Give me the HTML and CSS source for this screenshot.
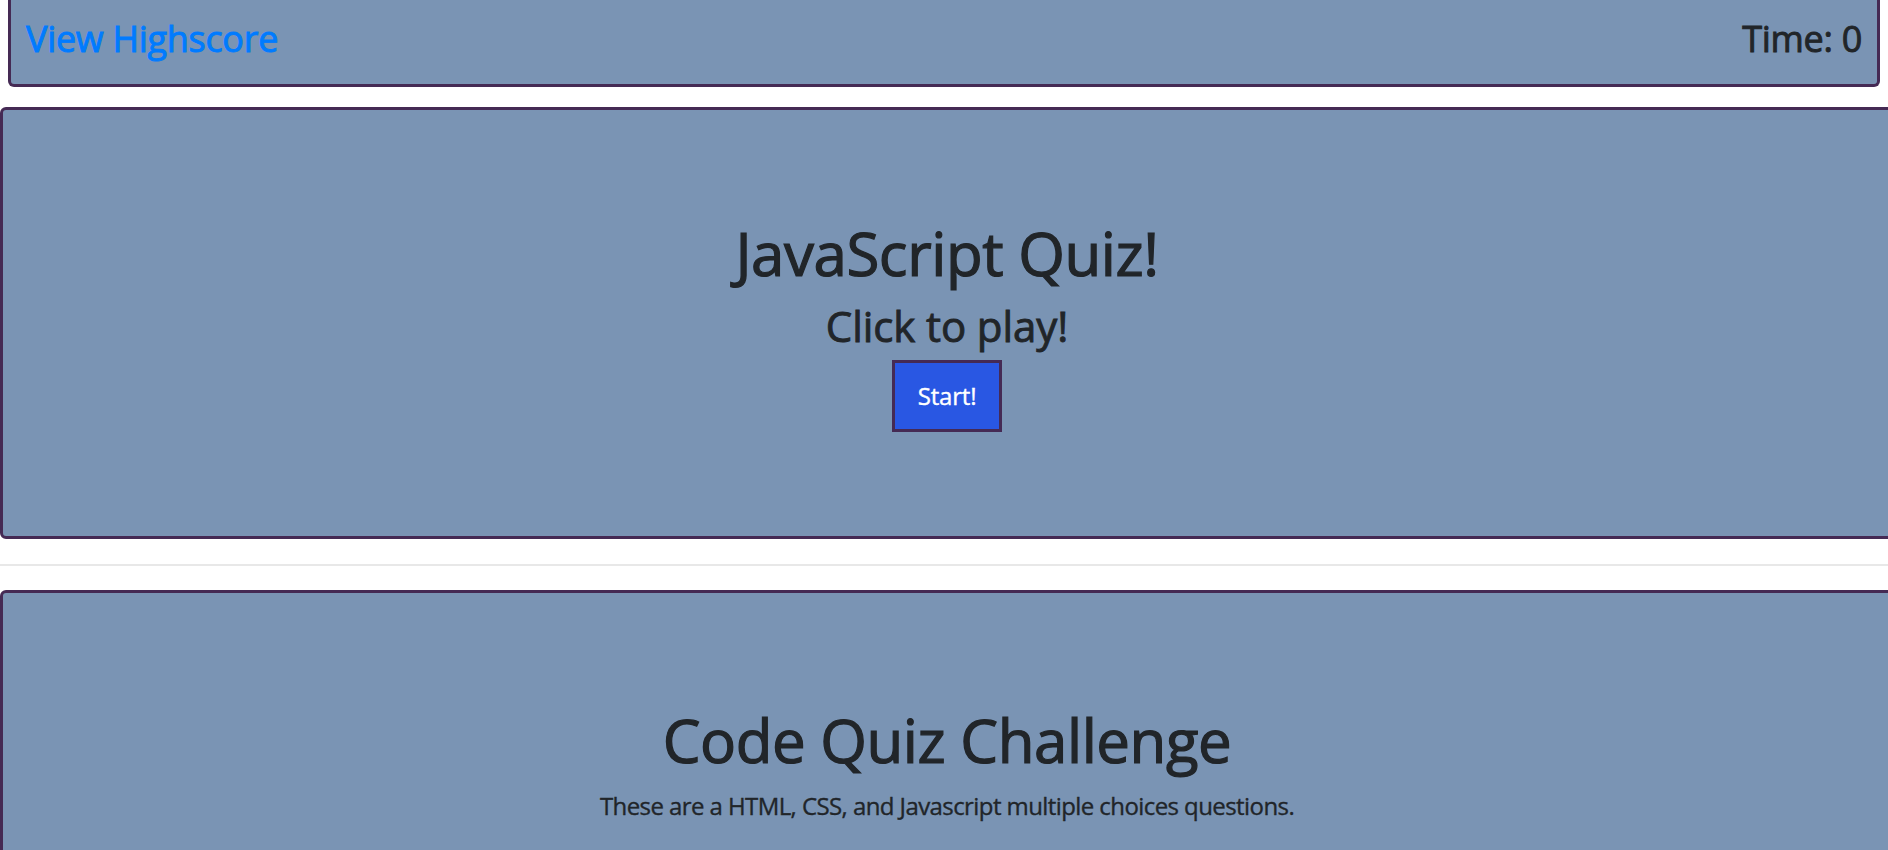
FILE: index.html
```html
<!DOCTYPE html>
<html lang="en">
<head>
<meta charset="utf-8">
<title>Code Quiz</title>
<link rel="stylesheet" href="styles.css">
</head>
<body>
<header class="topbar">
  <a class="highscore-link" href="#">View Highscore</a>
  <h4 class="timer">Time: 0</h4>
</header>
<section class="card card-start">
  <h1 class="title">JavaScript Quiz!</h1>
  <h3 class="subtitle">Click to play!</h3>
  <button class="start-btn">Start!</button>
</section>
<hr class="divider">
<section class="card card-intro">
  <h1 class="title">Code Quiz Challenge</h1>
  <p class="lead">These are a HTML, CSS, and Javascript multiple choices questions.</p>
</section>
</body>
</html>
```
FILE: styles.css
```css
html { overflow-x: hidden; }
body {
  margin: 0;
  font-family: "Open Sans", "Noto Sans", sans-serif;
  font-size: 24px;
  line-height: 1.5;
  color: #212529;
  background: #fff;
}
.topbar {
  margin: 0 8px;
  height: 78px;
  padding: 0 15px 6px;
  display: flex;
  align-items: center;
  justify-content: space-between;
  background: #7a94b4;
  border: 3px solid #452a54;
  border-top: 0;
  border-radius: 0 0 6px 6px;
}
.highscore-link {
  color: #007bff;
  text-decoration: none;
  font-size: 36px;
  font-weight: 400;
  line-height: 1.2;
  letter-spacing: -0.3px;
  -webkit-text-stroke: 0.9px #007bff;
}
.timer {
  margin: 0;
  font-size: 36px;
  font-weight: 400;
  line-height: 1.2;
  letter-spacing: -0.3px;
  -webkit-text-stroke: 0.9px #212529;
}
.card {
  width: 100%;
  background: #7a94b4;
  border: 3px solid #452a54;
  border-radius: 6px;
  display: flex;
  flex-direction: column;
  align-items: center;
  text-align: center;
}
.card-start {
  margin-top: 20px;
  padding: 107px 0 104px;
}
.card-intro {
  padding: 111px 0 190px;
}
.title {
  margin: 0 0 12px;
  font-size: 60px;
  font-weight: 400;
  line-height: 1.2;
  letter-spacing: -0.45px;
  -webkit-text-stroke: 1.2px #212529;
}
.subtitle {
  margin: 0 0 9px;
  font-size: 42px;
  font-weight: 400;
  line-height: 1.2;
  letter-spacing: -0.1px;
  -webkit-text-stroke: 0.9px #212529;
}
.start-btn {
  font-family: inherit;
  font-size: 24px;
  color: #fff;
  background: #2957e3;
  border: 3px solid #452a54;
  padding: 15px 23px;
  line-height: 1.5;
  letter-spacing: -0.2px;
  -webkit-text-stroke: 0.4px #fff;
}
.lead {
  margin: 0;
  letter-spacing: -0.58px;
  -webkit-text-stroke: 0.35px #212529;
}
.divider {
  margin: 25px 0 24px;
  border: 0;
  border-top: 2px solid #e8e8e8;
}
```
